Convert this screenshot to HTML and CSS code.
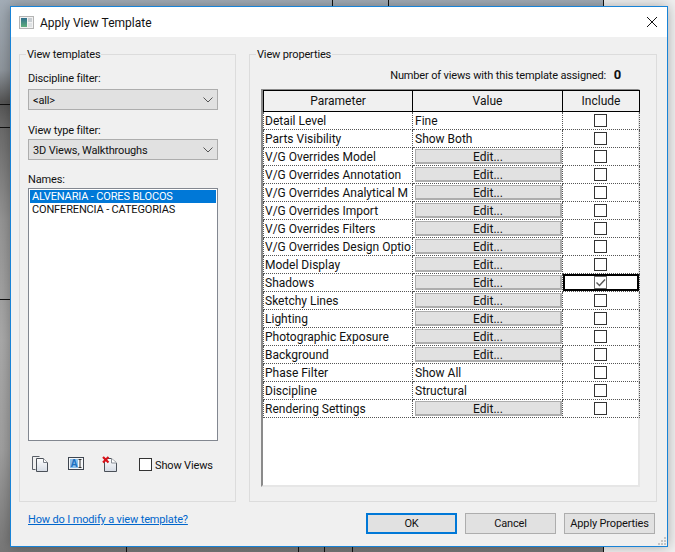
FILE: index.html
```html
<!DOCTYPE html>
<html lang="en">
<head>
  <meta charset="UTF-8" />
  <title>Apply View Template</title>
  <link rel="stylesheet" href="styles.css">
</head>
<body>
  <div class="dialog">
    <div class="titlebar">
      <svg class="app-icon" width="15" height="13" viewBox="0 0 15 13">
        <defs>
          <linearGradient id="pane" x1="0" y1="0" x2="0" y2="1">
            <stop offset="0" stop-color="#2f6f8c"/>
            <stop offset="1" stop-color="#5fae7c"/>
          </linearGradient>
        </defs>
        <rect x="0.5" y="0.5" width="14" height="12" fill="#f2f2f2" stroke="#b4b4b4"/>
        <rect x="2" y="2" width="6" height="9" fill="url(#pane)"/>
        <rect x="9" y="2" width="4" height="4" fill="#c9ced2"/>
        <rect x="9" y="7" width="4" height="4" fill="#dfe2e4"/>
      </svg>
      <span class="title">Apply View Template</span>
      <svg class="close" width="10" height="10" viewBox="0 0 10 10">
        <path d="M0 0L10 10M10 0L0 10" stroke="#111" stroke-width="1" fill="none"/>
      </svg>
    </div>

    <div class="main">
      <fieldset class="group templates">
        <legend>View templates</legend>

        <div class="label">Discipline filter:</div>
        <div class="combo combo-first">
          <span>&lt;all&gt;</span>
          <svg width="10" height="6" viewBox="0 0 10 6"><path d="M0.5 0.5L5 5L9.5 0.5" stroke="#555" fill="none"/></svg>
        </div>

        <div class="label label-type">View type filter:</div>
        <div class="combo">
          <span>3D Views, Walkthroughs</span>
          <svg width="10" height="6" viewBox="0 0 10 6"><path d="M0.5 0.5L5 5L9.5 0.5" stroke="#555" fill="none"/></svg>
        </div>

        <div class="label label-names">Names:</div>
        <div class="listbox">
          <div class="item selected">ALVENARIA - CORES BLOCOS</div>
          <div class="item">CONFERENCIA - CATEGORIAS</div>
        </div>

        <div class="tools">
          <svg class="tool tool-copy" width="16" height="16" viewBox="0 0 16 16">
            <defs>
              <linearGradient id="sheet" x1="0" y1="0" x2="0" y2="1">
                <stop offset="0" stop-color="#ffffff"/>
                <stop offset="1" stop-color="#d5dbe4"/>
              </linearGradient>
            </defs>
            <path d="M7.5 0.5H0.5V13.5H3.5" fill="none" stroke="#5a6068"/>
            <path d="M4.5 2.5H11.5L15.5 6.5V15.5H4.5Z" fill="url(#sheet)" stroke="#4a5058"/>
            <path d="M11.5 2.5V6.5H15.5" fill="#fff" stroke="#7a8088"/>
          </svg>
          <svg class="tool tool-rename" width="16" height="13" viewBox="0 0 16 13">
            <rect x="0.5" y="0.5" width="15" height="12" fill="#f4f6f8" stroke="#3f4650"/>
            <rect x="2" y="2" width="8" height="9" fill="#8cc0ea"/>
            <text x="6" y="10" class="icon-letter">A</text>
            <path d="M10.5 2.5H13.5M12 2.5V10.5M10.5 10.5H13.5" fill="none" stroke="#333"/>
          </svg>
          <svg class="tool tool-delete" width="15" height="16" viewBox="0 0 15 16">
            <path d="M2.5 2.5H9.5L14.5 7V15.5H2.5Z" fill="url(#sheet)" stroke="#4a5058"/>
            <path d="M9.5 2.5V7H14.5" fill="#fff" stroke="#8a9098"/>
            <path d="M1 1L6.5 6.5M6.5 1L1 6.5" stroke="#d8121a" stroke-width="2.2" fill="none"/>
          </svg>
          <span class="check show-views-box"></span>
          <span class="show-views">Show Views</span>
        </div>
      </fieldset>

      <fieldset class="group properties">
        <legend>View properties</legend>
        <div class="assigned">Number of views with this template assigned: <b>0</b></div>
        <div class="grid-wrap">
          <table class="grid">
            <thead>
              <tr><th class="col-param">Parameter</th><th class="col-value">Value</th><th class="col-inc">Include</th></tr>
            </thead>
            <tbody>
              <tr><td>Detail Level</td><td>Fine</td><td class="inc"><span class="check"></span></td></tr>
              <tr><td>Parts Visibility</td><td>Show Both</td><td class="inc"><span class="check"></span></td></tr>
              <tr><td>V/G Overrides Model</td><td><div class="edit">Edit...</div></td><td class="inc"><span class="check"></span></td></tr>
              <tr><td>V/G Overrides Annotation</td><td><div class="edit">Edit...</div></td><td class="inc"><span class="check"></span></td></tr>
              <tr><td>V/G Overrides Analytical M</td><td><div class="edit">Edit...</div></td><td class="inc"><span class="check"></span></td></tr>
              <tr><td>V/G Overrides Import</td><td><div class="edit">Edit...</div></td><td class="inc"><span class="check"></span></td></tr>
              <tr><td>V/G Overrides Filters</td><td><div class="edit">Edit...</div></td><td class="inc"><span class="check"></span></td></tr>
              <tr><td>V/G Overrides Design Optio</td><td><div class="edit">Edit...</div></td><td class="inc"><span class="check"></span></td></tr>
              <tr><td>Model Display</td><td><div class="edit">Edit...</div></td><td class="inc"><span class="check"></span></td></tr>
              <tr><td>Shadows</td><td><div class="edit">Edit...</div></td><td class="inc current"><span class="check checked"><svg width="11" height="11" viewBox="0 0 11 11"><path d="M1.5 5.5L4.5 8.5L10 2.5" stroke="#555" stroke-width="1.4" fill="none"/></svg></span></td></tr>
              <tr><td>Sketchy Lines</td><td><div class="edit">Edit...</div></td><td class="inc"><span class="check"></span></td></tr>
              <tr><td>Lighting</td><td><div class="edit">Edit...</div></td><td class="inc"><span class="check"></span></td></tr>
              <tr><td>Photographic Exposure</td><td><div class="edit">Edit...</div></td><td class="inc"><span class="check"></span></td></tr>
              <tr><td>Background</td><td><div class="edit">Edit...</div></td><td class="inc"><span class="check"></span></td></tr>
              <tr><td>Phase Filter</td><td>Show All</td><td class="inc"><span class="check"></span></td></tr>
              <tr><td>Discipline</td><td>Structural</td><td class="inc"><span class="check"></span></td></tr>
              <tr><td>Rendering Settings</td><td><div class="edit">Edit...</div></td><td class="inc"><span class="check"></span></td></tr>
            </tbody>
          </table>
        </div>
      </fieldset>
    </div>

    <div class="footer">
      <a class="help" href="#">How do I modify a view template?</a>
      <div class="buttons">
        <button class="btn btn-default">OK</button>
        <button class="btn">Cancel</button>
        <button class="btn">Apply Properties</button>
      </div>
    </div>

    <svg class="grip" width="10" height="10" viewBox="0 0 10 10">
      <path d="M7 1h2v2H7zM4 4h2v2H4zM7 4h2v2H7zM1 7h2v2H1zM4 7h2v2H4zM7 7h2v2H7z" fill="#c4c4c4"/>
    </svg>
  </div>
</body>
</html>
```

FILE: styles.css
```css
* {
  box-sizing: border-box;
}
html, body {
  height: 100%;
}
body {
  margin: 0;
  padding: 6px 0 0 10px;
  overflow: hidden;
  font-family: Roboto, "Noto Sans", sans-serif;
  font-size: 11px;
  letter-spacing: -0.15px;
  color: #111;
  /* the model view behind the dialog */
  background:
    linear-gradient(#111, #111) 0 104px / 10px 1px no-repeat,
    linear-gradient(#111, #111) 0 127px / 10px 1px no-repeat,
    linear-gradient(#111, #111) 0 299px / 10px 1px no-repeat,
    linear-gradient(#111, #111) 332px 0 / 1px 6px no-repeat,
    linear-gradient(#111, #111) 388px 0 / 1px 6px no-repeat,
    linear-gradient(#111, #111) 603px 0 / 1px 6px no-repeat,
    linear-gradient(#111, #111) 126px 547px / 1px 5px no-repeat,
    linear-gradient(#111, #111) 298px 547px / 1px 5px no-repeat,
    linear-gradient(#111, #111) 324px 547px / 1px 5px no-repeat,
    linear-gradient(#111, #111) 352px 547px / 1px 5px no-repeat,
    linear-gradient(#111, #111) 603px 547px / 1px 5px no-repeat,
    linear-gradient(#f0f0f0, #f0f0f0) 604px 0 / 71px 100% no-repeat,
    linear-gradient(#a3adb7 0, #8f969d 70px, #555 102px, #6a6a6a 125px, #959595 220px, #aaa 340px, #a0a0a0 450px, #777 552px);
}

.dialog {
  position: relative;
  width: 658px;
  height: 541px;
  border: 1px solid #1883d7;
  background: #f0f0f0;
  box-shadow: 0 0 12px rgba(0,0,0,0.3);
}

.titlebar {
  display: flex;
  align-items: center;
  height: 30px;
  padding: 0 10px 0 8px;
  background: white;
}
.app-icon {
  margin-top: 1px;
}
.title {
  margin-left: 6px;
  margin-top: 1px;
  font-size: 12px;
  letter-spacing: 0;
}
.close {
  margin-left: auto;
  margin-top: -1px;
}

.main {
  display: flex;
  gap: 13px;
  padding: 9px 0 0 8px;
}
.group {
  height: 456px;
  margin: 0;
  padding: 8px;
  border: 1px solid #dcdcdc;
}
.group legend {
  padding: 0 1px;
  margin-left: -2px;
  line-height: 18px;
  height: 16px;
}
.templates {
  width: 217px;
}
.properties {
  width: 408px;
  padding: 6px 12px;
}
.properties legend {
  margin-left: -6px;
}

.label {
  height: 16px;
  line-height: 17px;
}
.label-type {
  margin-top: 12px;
}
.label-names {
  margin-top: 11px;
}
.combo {
  display: flex;
  align-items: center;
  justify-content: space-between;
  width: 190px;
  height: 21px;
  margin-top: 1px;
  padding: 1px 4px 0;
  background: #e1e1e1;
  border: 1px solid #adadad;
}
.combo-first {
  margin-top: 3px;
}
.listbox {
  width: 190px;
  height: 253px;
  margin-top: 1px;
  padding: 1px;
  background: white;
  border: 1px solid #828790;
}
.item {
  height: 13px;
  line-height: 14px;
  padding-left: 2px;
  white-space: nowrap;
}
.item.selected {
  background: #0078d7;
  color: white;
}

.tools {
  display: flex;
  align-items: flex-start;
  height: 16px;
  margin-top: 15px;
}
.tool {
  display: block;
  flex: none;
}
.tool-copy {
  margin-left: 4px;
}
.tool-rename {
  margin-left: 20px;
  margin-top: 1px;
}
.tool-delete {
  margin-left: 18px;
}
.icon-letter {
  font-family: "Liberation Sans", sans-serif;
  font-size: 10px;
  font-weight: bold;
  fill: #1b6fc0;
  text-anchor: middle;
}
.check {
  display: inline-flex;
  align-items: center;
  justify-content: center;
  width: 13px;
  height: 13px;
  background: white;
  border: 1px solid #333;
}
.check.checked {
  border-color: #666;
}
.show-views-box {
  flex: none;
  margin-left: 22px;
  margin-top: 2px;
}
.show-views {
  margin-left: 3px;
  line-height: 20px;
  white-space: nowrap;
}

.assigned {
  height: 16px;
  line-height: 14px;
  padding-right: 23px;
  text-align: right;
  white-space: nowrap;
}
.assigned b {
  margin-left: 5px;
  font-size: 13px;
}

.grid-wrap {
  width: 379px;
  height: 398px;
  margin-top: 5px;
  margin-left: -1px;
  background: white;
  border-top: 1px solid #8a8a8a;
  border-left: 2px solid #8a8a8a;
  border-right: 2px solid #e6e6e6;
  border-bottom: 2px solid #e6e6e6;
}
.grid {
  table-layout: fixed;
  width: 376px;
  border-collapse: collapse;
  font-size: 12px;
  letter-spacing: 0;
}
.col-param {
  width: 149px;
}
.col-value {
  width: 150px;
}
.col-inc {
  width: 77px;
}
.grid th {
  height: 21px;
  padding: 0;
  font-weight: normal;
  background: #f0f0f0;
  border: 1px solid #000;
}
.grid td {
  height: 18px;
  padding: 1px 0 0 2px;
  line-height: 15px;
  white-space: nowrap;
  overflow: hidden;
  border: 1px dotted #555;
  border-top: 0;
}
.grid td:first-child {
  padding-left: 1px;
}
.grid td.inc {
  padding: 0 2px 0 0;
  text-align: center;
  vertical-align: middle;
}
.inc .check {
  vertical-align: middle;
}
.grid td.current {
  box-shadow: inset 0 0 0 2px #000;
}
.grid td .edit {
  height: 15px;
  margin-top: -1px;
  line-height: 14px;
  text-align: center;
  background: #e1e1e1;
  border: 1px solid #adadad;
  border-width: 1px 2px 2px 1px;
}

.footer {
  display: flex;
  align-items: center;
  justify-content: space-between;
  margin-top: 11px;
  padding: 0 12px 0 17px;
}
.help {
  margin-bottom: 8px;
  color: #0066cc;
}
.buttons {
  display: flex;
  gap: 8px;
}
.btn {
  width: 91px;
  height: 21px;
  padding: 0;
  font-family: inherit;
  font-size: 11px;
  letter-spacing: -0.15px;
  color: #111;
  background: #e1e1e1;
  border: 1px solid #adadad;
  white-space: nowrap;
}
.btn-default {
  border: 2px solid #0078d7;
}

.grip {
  position: absolute;
  right: 0;
  bottom: 0;
}
```
